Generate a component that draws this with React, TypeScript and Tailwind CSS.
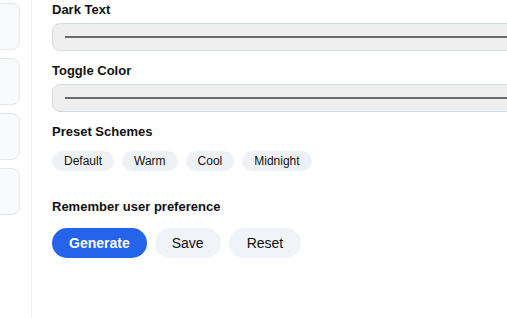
import { useState } from 'react';

const presets = ['Default', 'Warm', 'Cool', 'Midnight'];

function ColorField({ label, className = '' }: { label: string; className?: string }) {
    return (
        <div className={className}>
            <div className="h-4 text-[13px] leading-4 font-bold text-[#111]">{label}</div>
            <div className="mt-[5px] h-[28px] w-[480px] rounded-[8px] border border-[#d6dce3] bg-[#efefef] flex items-center pl-[12px]">
                <div className="h-[2px] w-full bg-[#6b6b6b]" />
            </div>
        </div>
    );
}

export default function App() {
    const [preset, setPreset] = useState('Default');

    return (
        <div className="flex h-[318px] w-[507px] overflow-hidden bg-white font-['Liberation_Sans',Arial,sans-serif]">
            {/* Sidebar, mostly scrolled out of view */}
            <aside className="w-[32px] shrink-0 border-r border-[#eceff3] overflow-hidden">
                <div className="ml-[-80px] mr-[11px] pt-[3px] flex flex-col gap-[8px]">
                    {[0, 1, 2, 3].map((i) => (
                        <div key={i} className="h-[47px] rounded-[8px] border border-[#e4e8ee] bg-[#f8fafc]" />
                    ))}
                </div>
            </aside>

            <main className="flex-1 pl-[20px] pt-[2px]">
                <ColorField label="Dark Text" />
                <ColorField label="Toggle Color" className="mt-[12px]" />

                <div className="mt-[12px] h-4 text-[13px] leading-4 font-bold text-[#111]">Preset Schemes</div>
                <div className="mt-[11px] flex gap-[8px]">
                    {presets.map((p) => (
                        <button
                            key={p}
                            onClick={() => setPreset(p)}
                            className={`h-[20px] px-[12px] rounded-full bg-[#eef2f7] text-[12px] leading-[14px] text-[#111] ${preset === p ? '' : ''}`}
                        >
                            {p}
                        </button>
                    ))}
                </div>

                <div className="mt-[28px] h-4 text-[13px] leading-4 font-bold text-[#111]">Remember user preference</div>
                <div className="mt-[13px] flex gap-[8px]">
                    <button className="h-[30px] px-[17px] rounded-full bg-[#2563eb] text-white text-[14px] font-bold">
                        Generate
                    </button>
                    <button className="h-[30px] px-[17px] rounded-full bg-[#f0f3f7] text-[#111] text-[14px]">
                        Save
                    </button>
                    <button className="h-[30px] px-[18px] rounded-full bg-[#f0f3f7] text-[#111] text-[14px]">
                        Reset
                    </button>
                </div>
            </main>
        </div>
    );
}
